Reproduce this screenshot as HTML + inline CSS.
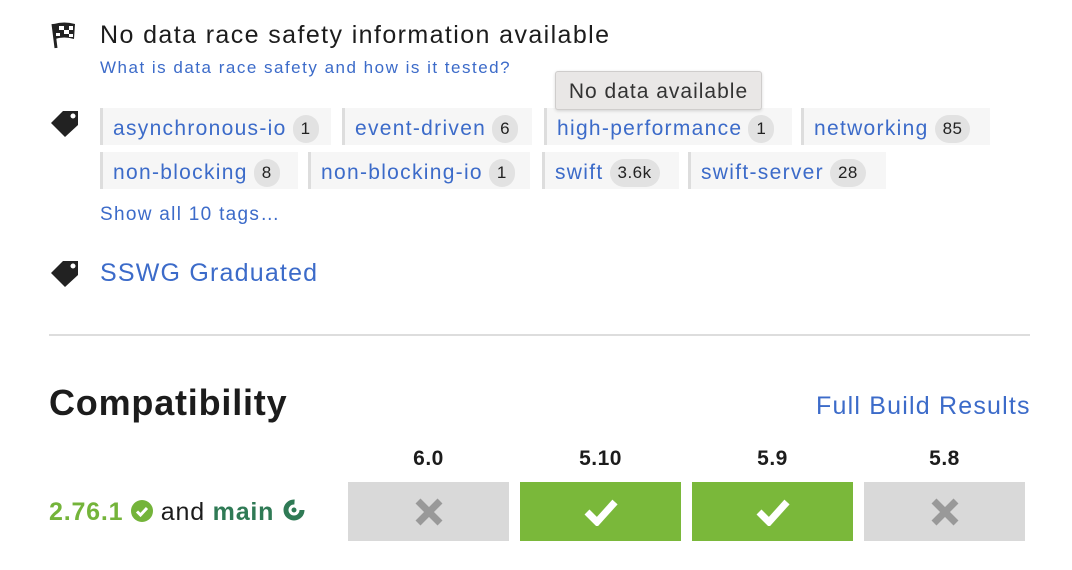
<!DOCTYPE html>
<html><head><meta charset="utf-8"><style>
*{margin:0;padding:0;box-sizing:border-box}
body{width:1072px;height:570px;background:#fff;font-family:"Liberation Sans",sans-serif;position:relative;overflow:hidden;color:#1c1c1c;letter-spacing:1.3px}
.a{position:absolute;white-space:nowrap}
.blue{color:#3c6bc9}
.tag{position:absolute;height:37px;background:#f6f6f6;border-left:3px solid #ddd;font-size:21px;color:#3c6bc9;line-height:37px;padding-left:10px;padding-top:2px}
.tag span{display:inline-block;background:#e2e2e2;color:#222;font-size:17px;line-height:28px;height:28px;border-radius:14px;padding:0 8px;margin-left:6px;vertical-align:1px;letter-spacing:0.5px}
.cell{position:absolute;top:482px;height:59px;width:161px;display:flex;align-items:center;justify-content:center}
.hd{position:absolute;top:447px;width:161px;text-align:center;font-weight:bold;font-size:21px;letter-spacing:0.5px}
</style></head><body>
<svg class="a" style="left:50px;top:20px" width="28" height="30" viewBox="0 0 28 30"><path d="M3 4 L6 28" stroke="#222" stroke-width="3"/><path d="M4 4 Q14 1 25 4 L24 19 Q14 16 5 19Z" fill="#222"/><rect x="9" y="6" width="5" height="4" fill="#fff"/><rect x="19" y="6" width="4" height="4" fill="#fff"/><rect x="14" y="10" width="5" height="4" fill="#fff"/><rect x="6" y="13" width="4" height="3" fill="#fff"/><rect x="19" y="14" width="4" height="3" fill="#fff"/></svg>
<div class="a" style="left:100px;top:21px;font-size:25px;letter-spacing:1.4px">No data race safety information available</div>
<div class="a blue" style="left:100px;top:58px;font-size:17px;letter-spacing:1.5px">What is data race safety and how is it tested?</div>
<svg class="a" style="left:50px;top:108px" width="30" height="30" viewBox="0 0 30 30"><path d="M1 15 L13 3 L28 3 L28 17 L15 29Z" fill="#222"/><circle cx="23" cy="8" r="2.5" fill="#fff"/></svg>
<div class="tag" style="left:100px;top:108px;width:231px">asynchronous-io<span>1</span></div>
<div class="tag" style="left:342px;top:108px;width:190px">event-driven<span>6</span></div>
<div class="tag" style="left:544px;top:108px;width:248px">high-performance<span>1</span></div>
<div class="tag" style="left:801px;top:108px;width:189px">networking<span>85</span></div>
<div class="tag" style="left:100px;top:152px;width:198px">non-blocking<span>8</span></div>
<div class="tag" style="left:308px;top:152px;width:222px">non-blocking-io<span>1</span></div>
<div class="tag" style="left:542px;top:152px;width:137px">swift<span>3.6k</span></div>
<div class="tag" style="left:688px;top:152px;width:198px">swift-server<span>28</span></div>
<div class="a" style="left:555px;top:71px;width:207px;height:39px;background:#e9e7e6;border:1px solid #cfcdcc;border-radius:3px;font-size:21px;line-height:39px;text-align:center;color:#333;letter-spacing:1px;box-shadow:0 1px 3px rgba(0,0,0,.15)">No data available</div>
<div class="a blue" style="left:100px;top:204px;font-size:19px">Show all 10 tags…</div>
<svg class="a" style="left:50px;top:258px" width="30" height="30" viewBox="0 0 30 30"><path d="M1 15 L13 3 L28 3 L28 17 L15 29Z" fill="#222"/><circle cx="23" cy="8" r="2.5" fill="#fff"/></svg>
<div class="a blue" style="left:100px;top:259px;font-size:25px;letter-spacing:1.2px">SSWG Graduated</div>
<div class="a" style="left:49px;top:334px;width:981px;height:2px;background:#ddd"></div>
<div class="a" style="left:49px;top:382px;font-size:36px;font-weight:bold;letter-spacing:0.8px">Compatibility</div>
<div class="a blue" style="left:816px;top:392px;font-size:25px;letter-spacing:1.2px">Full Build Results</div>
<div class="a" style="left:49px;top:497px;font-size:25px;line-height:30px;letter-spacing:0.8px"><b style="color:#74b43a">2.76.1</b> <svg width="22" height="22" viewBox="0 0 22 22" style="vertical-align:-2px"><circle cx="11" cy="11" r="11" fill="#74b43a"/><path d="M6 11.5l3.5 3.5 6.5-7" stroke="#fff" stroke-width="3" fill="none"/></svg> and <b style="color:#2f7a55">main</b> <svg width="24" height="24" viewBox="0 0 24 24" style="vertical-align:-2px"><circle cx="12" cy="12" r="8" stroke="#2f7a55" stroke-width="5" fill="none" stroke-dasharray="38 12"/><circle cx="12" cy="12" r="2.5" fill="#2f7a55"/></svg></div>
<div class="hd" style="left:348px">6.0</div><div class="hd" style="left:520px">5.10</div><div class="hd" style="left:692px">5.9</div><div class="hd" style="left:864px">5.8</div>
<div class="cell" style="left:348px;background:#d9d9d9"><svg width="32" height="32"><path d="M5 5L27 27M27 5L5 27" stroke="#999" stroke-width="7"/></svg></div>
<div class="cell" style="left:520px;background:#7ab83a"><svg width="34" height="28"><path d="M3 14l10 10L31 4" stroke="#fff" stroke-width="7" fill="none"/></svg></div>
<div class="cell" style="left:692px;background:#7ab83a"><svg width="34" height="28"><path d="M3 14l10 10L31 4" stroke="#fff" stroke-width="7" fill="none"/></svg></div>
<div class="cell" style="left:864px;background:#d9d9d9"><svg width="32" height="32"><path d="M5 5L27 27M27 5L5 27" stroke="#999" stroke-width="7"/></svg></div>
</body></html>
